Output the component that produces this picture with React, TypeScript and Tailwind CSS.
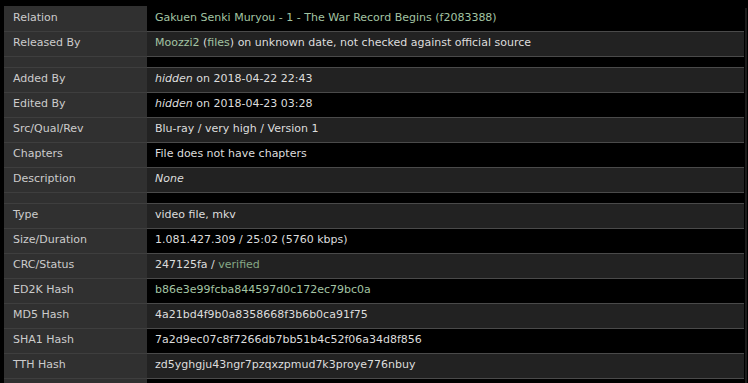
import type { ReactNode } from 'react'

type Row = { label: string; value: ReactNode } | { sep: true }

const link = 'text-[#a3c4a3]'

const rows: Row[] = [
  {
    label: 'Relation',
    value: (
      <>
        <span className={link}>Gakuen Senki Muryou - 1 - The War Record Begins</span>{' '}
        <span className={link}>(f2083388)</span>
      </>
    ),
  },
  {
    label: 'Released By',
    value: (
      <>
        <span className={link}>Moozzi2</span> (<span className={link}>files</span>) on unknown date, not checked
        against official source
      </>
    ),
  },
  { sep: true },
  {
    label: 'Added By',
    value: (
      <>
        <i>hidden</i> on 2018-04-22 22:43
      </>
    ),
  },
  {
    label: 'Edited By',
    value: (
      <>
        <i>hidden</i> on 2018-04-23 03:28
      </>
    ),
  },
  { label: 'Src/Qual/Rev', value: 'Blu-ray / very high / Version 1' },
  { label: 'Chapters', value: 'File does not have chapters' },
  { label: 'Description', value: <i>None</i> },
  { sep: true },
  { label: 'Type', value: 'video file, mkv' },
  { label: 'Size/Duration', value: '1.081.427.309 / 25:02 (5760 kbps)' },
  {
    label: 'CRC/Status',
    value: (
      <>
        247125fa / <span className="text-[#86a886]">verified</span>
      </>
    ),
  },
  { label: 'ED2K Hash', value: <span className={link}>b86e3e99fcba844597d0c172ec79bc0a</span> },
  { label: 'MD5 Hash', value: '4a21bd4f9b0a8358668f3b6b0ca91f75' },
  { label: 'SHA1 Hash', value: '7a2d9ec07c8f7266db7bb51b4c52f06a34d8f856' },
  { label: 'TTH Hash', value: 'zd5yghgju43ngr7pzqxzpmud7k3proye776nbuy' },
  { label: '', value: '' },
]

export default function App() {
  let stripe = 0
  return (
    <div className="h-[383px] w-[748px] overflow-hidden bg-black pl-[4px] pt-[6px] font-['DejaVu_Sans',sans-serif] text-[11px]">
      <div className="flex">
        <table className="w-[740px] border-collapse">
          <tbody>
            {rows.map((row, i) => {
              if ('sep' in row) {
                stripe = 1
                return (
                  <tr key={i} className="h-[11px]">
                    <td className="w-[143px] border-b border-[#3e3e3e] bg-[#303030]" />
                    <td className="border-b border-[#4a4a4a] bg-black" />
                  </tr>
                )
              }
              const odd = stripe % 2 === 1
              stripe++
              return (
                <tr key={i} className="h-[25px]">
                  <td className="w-[143px] border-b border-[#3e3e3e] bg-[#303030] pl-[9px] align-middle text-[#cccccc]">
                    {row.label}
                  </td>
                  <td
                    className={`border-b border-[#4a4a4a] pl-[8px] align-middle text-[#dddddd] ${
                      odd ? 'bg-[#222222]' : 'bg-black'
                    }`}
                  >
                    {row.value}
                  </td>
                </tr>
              )
            })}
          </tbody>
        </table>
        <div className="ml-[1px] mt-[2px] w-[2px] bg-[#1c1c1c]" />
      </div>
    </div>
  )
}
